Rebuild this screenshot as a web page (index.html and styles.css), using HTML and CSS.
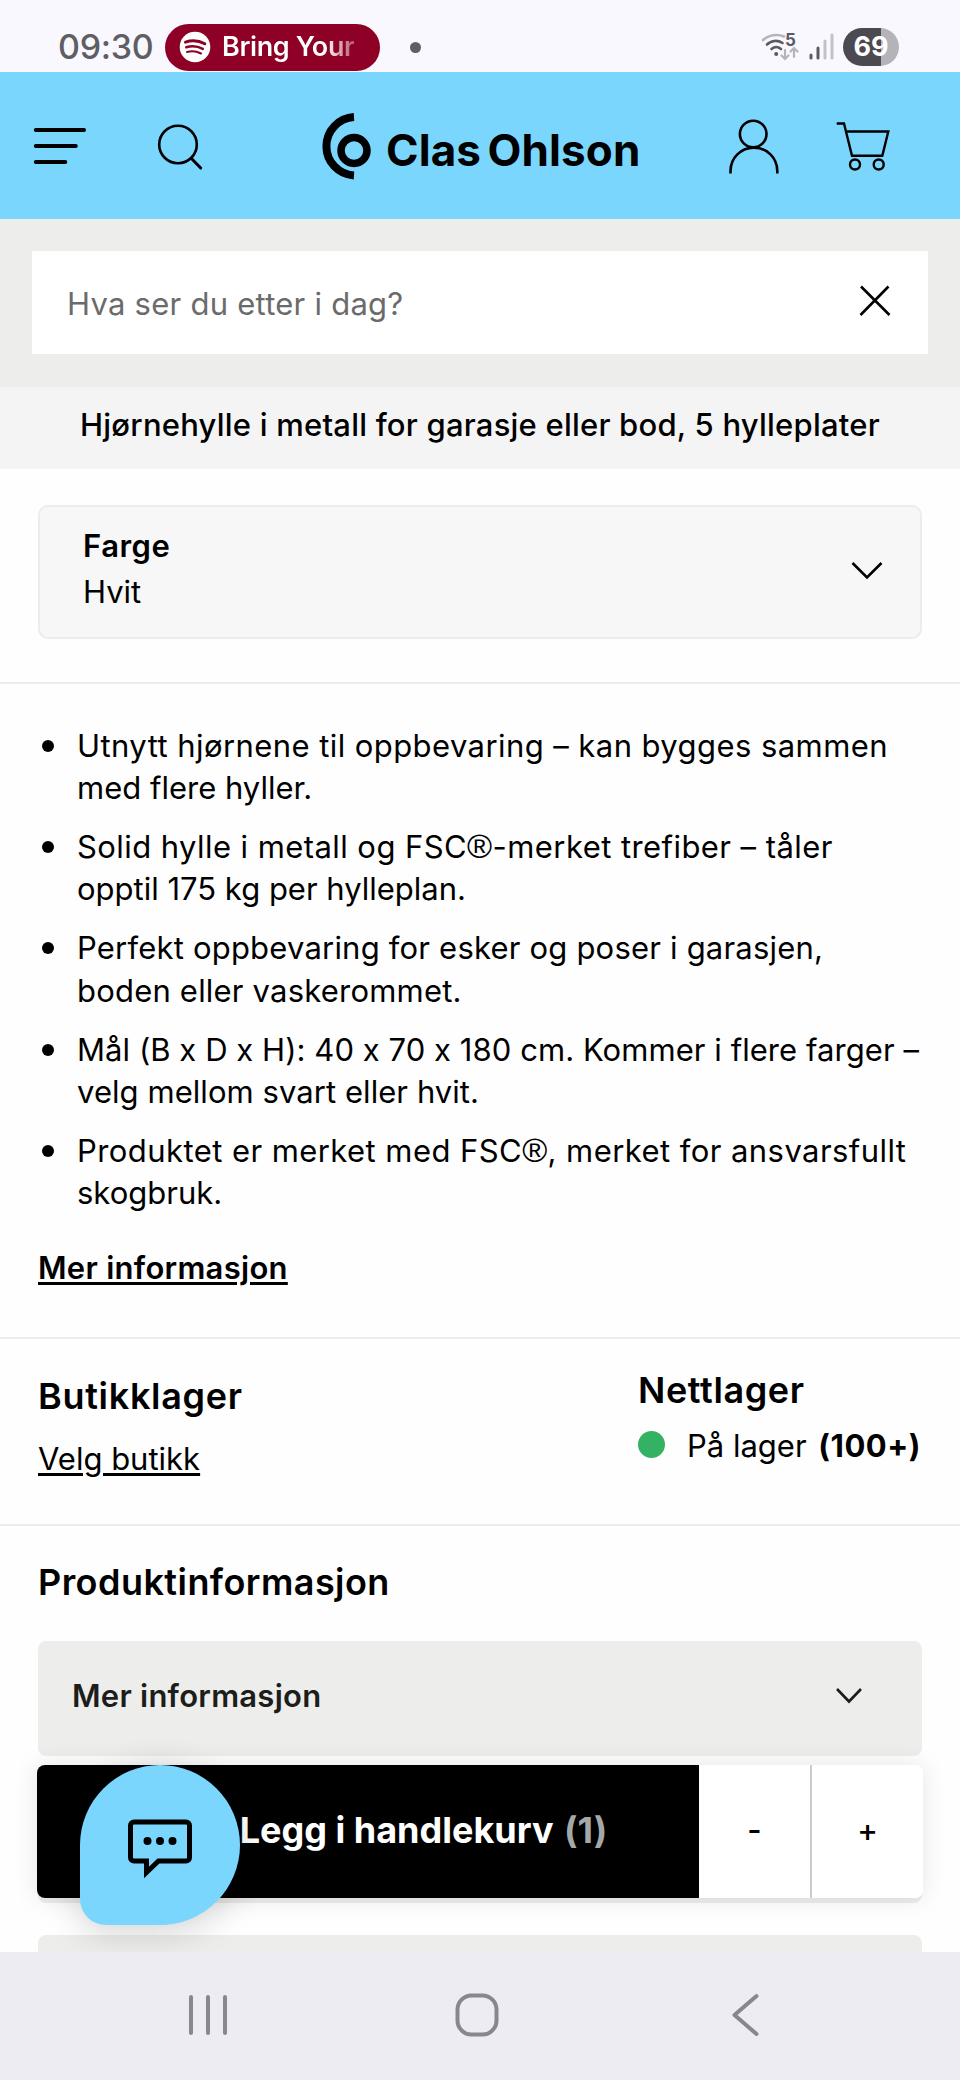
FILE: index.html
```html
<!DOCTYPE html>
<html lang="no">
<head>
    <meta charset="UTF-8">
    <meta name="viewport" content="width=device-width, initial-scale=1.0">
    <title>Clas Ohlson</title>
    <link rel="stylesheet" href="styles.css">
</head>
<body>
    <!-- Phone status bar -->
    <div class="status-bar">
        <span class="clock">09:30</span>
        <div class="music-pill">
            <svg width="32" height="32" viewBox="0 0 32 32" fill="none" stroke="#8e0025" stroke-linecap="round">
                <circle cx="16" cy="16" r="15.3" fill="#fff" stroke="none"/>
                <path d="M6.5 11.2c6-2 13.500-1.500 19.300 1.600" stroke-width="3"/>
                <path d="M7.300 16.300c5.500-1.600 11.500-1 16.500 1.600" stroke-width="2.500"/>
                <path d="M8 21c4.500-1.200 9.500-.8 14 1.500" stroke-width="2"/>
            </svg>
            <span class="song">Bring Your</span>
        </div>
        <span class="dot"></span>
        <div class="status-icons">
            <svg width="38" height="28" viewBox="0 0 38 28" fill="none" stroke-linecap="round">
                <path d="M2 7C8 1.500 17 .8 23 3.500" stroke="#b5b4ba" stroke-width="2.600"/>
                <path d="M6 11.500c4.500-4.500 11-4.500 15.500-1.500M10.500 16c3-2.500 6.500-2.500 9.500 0" stroke="#5b5a60" stroke-width="2.600"/>
                <circle cx="15.200" cy="21" r="2" fill="#5b5a60"/>
                <path d="M24 17v9M20.500 22.500l3.500 3.500 3.500-3.500M33 24v-9M29.500 18.500l3.500-3.500 3.500 3.500" stroke="#b5b4ba" stroke-width="2.200"/>
                <text x="24" y="12.500" class="wifi-num">5</text>
            </svg>
            <svg width="26" height="28" viewBox="0 0 26 28" stroke-width="3" stroke-linecap="round">
                <path d="M3 22v3M10 15v10" stroke="#5b5a60"/>
                <path d="M17 8v17M24 2v23" stroke="#c2c1c8"/>
            </svg>
            <span class="battery">69</span>
        </div>
    </div>

    <header>
        <svg class="menu" width="54" height="40" viewBox="0 0 54 40" stroke="#000" stroke-width="4" stroke-linecap="round">
            <path d="M2.800 4H51M2.800 20h40M2.800 36h29.500"/>
        </svg>
        <svg class="search" width="48" height="48" viewBox="0 0 48 48" fill="none" stroke="#000" stroke-width="2.600" stroke-linecap="round">
            <circle cx="21" cy="21.500" r="18.800"/>
            <path d="M34.500 35.500L43.700 45" stroke-width="3"/>
        </svg>
        <div class="logo">
            <svg width="52" height="68" viewBox="0 0 52 68" fill="none" stroke="#000">
                <path d="M34 5a29.300 29.300 0 0 0 0 58.500" stroke-width="8"/>
                <circle cx="34" cy="38.500" r="13" stroke-width="7.500"/>
            </svg>
            <span class="brand">Clas Ohlson</span>
        </div>
        <svg class="user" width="50" height="56" viewBox="0 0 50 56" fill="none" stroke="#000" stroke-width="2.600">
            <circle cx="24.200" cy="15" r="13.300"/>
            <path d="M1.500 54.500V52a23.400 23.400 0 0 1 46.800 0v2.500"/>
        </svg>
        <svg class="cart" width="56" height="52" viewBox="0 0 56 52" fill="none" stroke="#000" stroke-width="2.400">
            <path d="M.7 3.500H8l8 32.200h30.300l6-24.200H10"/>
            <circle cx="19" cy="44.500" r="5"/>
            <circle cx="42.700" cy="44.500" r="5"/>
        </svg>
    </header>

    <div class="search-bar">
        <div class="search-box">
            <span class="placeholder">Hva ser du etter i dag?</span>
            <svg width="32" height="32" viewBox="0 0 32 32" stroke="#000" stroke-width="2.600">
                <path d="M2 1.500L30.500 30M29.500 1.500L1.500 30"/>
            </svg>
        </div>
    </div>

    <main>
        <h1>Hjørnehylle i metall for garasje eller bod, 5 hylleplater</h1>

        <section class="options">
            <div class="select-box">
                <div>
                    <div class="select-label">Farge</div>
                    <div class="select-value">Hvit</div>
                </div>
                <svg width="32" height="20" viewBox="0 0 32 20" fill="none" stroke="#000" stroke-width="2.600">
                    <path d="M1.500 2L16 16.500 30.500 2"/>
                </svg>
            </div>
        </section>

        <section class="details">
            <ul>
                <li><span class="wider">Utnytt hjørnene til oppbevaring – kan bygges sammen</span><br>med flere hyller.</li>
                <li><span class="wider">Solid hylle i metall og FSC<span class="reg">®</span>-merket trefiber – tåler</span><br>opptil 175 kg per hylleplan.</li>
                <li class="wide">Perfekt oppbevaring for esker og poser i garasjen,<br>boden eller vaskerommet.</li>
                <li class="normal">Mål (B x D x H): 40 x 70 x 180 cm. Kommer i flere farger –<br>velg mellom svart eller hvit.</li>
                <li><span class="wider">Produktet er merket med FSC<span class="reg">®</span>, merket for ansvarsfullt</span><br>skogbruk.</li>
            </ul>
            <a class="more-link" href="#">Mer informasjon</a>
        </section>

        <section class="stock">
            <div class="store">
                <h2 class="h-store">Butikklager</h2>
                <a class="store-link" href="#">Velg butikk</a>
            </div>
            <div class="online">
                <h2 class="h-online">Nettlager</h2>
                <div class="in-stock"><span class="green"></span><span>På lager <b>(100+)</b></span></div>
            </div>
        </section>

        <section class="product-info">
            <h2 class="h-info">Produktinformasjon</h2>
            <div class="panel">
                <span>Mer informasjon</span>
                <svg width="28" height="18" viewBox="0 0 28 18" fill="none" stroke="#1d1d1b" stroke-width="2.600">
                    <path d="M2 2l12 12.500L26 2"/>
                </svg>
            </div>
            <div class="panel"></div>
            <div class="panel"></div>
        </section>

        <!-- Sticky add to cart -->
        <div class="buy-bar">
            <button class="add">Legg i handlekurv <span>(1)</span></button>
            <button class="qty">-</button>
            <button class="qty plus">+</button>
        </div>

        <div class="chat">
            <svg width="64" height="60" viewBox="0 0 64 60" fill="none" stroke="#000" stroke-width="5">
                <path d="M6 3h52a3.500 3.500 0 0 1 3.500 3.500v32a3.500 3.500 0 0 1-3.500 3.500H30.500L18.500 53.500V42H6a3.500 3.500 0 0 1-3.500-3.500v-32A3.500 3.500 0 0 1 6 3z"/>
                <g fill="#000" stroke="none">
                    <circle cx="19.500" cy="22" r="4"/>
                    <circle cx="32" cy="22" r="4"/>
                    <circle cx="44.500" cy="22" r="4"/>
                </g>
            </svg>
        </div>
    </main>

    <!-- Android navigation -->
    <nav>
        <svg width="38" height="42" viewBox="0 0 38 42" stroke="#88878d" stroke-width="4" stroke-linecap="round">
            <path d="M2 3v36M19 3v36M36 3v36"/>
        </svg>
        <svg class="home" width="44" height="44" viewBox="0 0 44 44" fill="none" stroke="#88878d" stroke-width="4">
            <rect x="2.500" y="2.500" width="39" height="39" rx="14"/>
        </svg>
        <svg width="28" height="44" viewBox="0 0 28 44" fill="none" stroke="#88878d" stroke-width="4" stroke-linecap="round" stroke-linejoin="round">
            <path d="M25.500 3l-22 19 22 19"/>
        </svg>
    </nav>
</body>
</html>
```
FILE: styles.css
```css
* {
    box-sizing: border-box;
}
body {
    margin: 0;
    width: 960px;
    height: 2080px;
    display: flex;
    flex-direction: column;
    overflow: hidden;
    background: #fefefe;
    color: #000;
    font-family: Inter, "Liberation Sans", sans-serif;
    font-size: 31px;
    font-feature-settings: "calt" 0;
    line-height: 42px;
    white-space: nowrap;
}
svg {
    display: block;
    flex: none;
    overflow: visible;
}
a {
    color: #000;
    text-decoration-thickness: 2.5px;
    text-underline-offset: 3px;
}
h1, h2 {
    margin: 0;
}
button {
    border: 0;
    padding: 0;
    font: inherit;
    color: inherit;
}

/* status bar */
.status-bar {
    height: 72px;
    padding: 22px 61px 0 58px;
    display: flex;
    align-items: center;
    background: #f9f8fe;
}
.clock {
    width: 107px;
    font-size: 34px;
    font-weight: 500;
    color: #5f5e64;
    letter-spacing: -0.3px;
}
.music-pill {
    width: 215px;
    height: 47px;
    padding-left: 14px;
    display: flex;
    align-items: center;
    gap: 11px;
    border-radius: 24px;
    background: #8e0025;
}
.song {
    font-size: 27px;
    font-weight: 600;
    letter-spacing: -0.4px;
    color: transparent;
    background: linear-gradient(to right, #fff 78%, rgba(255, 255, 255, 0.35));
    -webkit-background-clip: text;
    background-clip: text;
}
.dot {
    width: 11px;
    height: 11px;
    margin-left: 30px;
    border-radius: 50%;
    background: #5f5e64;
}
.status-icons {
    margin-left: auto;
    display: flex;
    align-items: center;
    gap: 9px;
}
.wifi-num {
    font-size: 17px;
    font-weight: 700;
    line-height: 1;
    fill: #5b5a60;
}
.battery {
    width: 56px;
    height: 38px;
    border-radius: 19px;
    background: linear-gradient(to right, #4b4a50 68%, #b4b3ba 68%);
    color: #fff;
    font-size: 27px;
    font-weight: 700;
    line-height: 38px;
    text-align: center;
}

/* header */
header {
    height: 147px;
    padding: 0 68px 0 33px;
    display: flex;
    align-items: center;
    background: #7ad6fd;
}
.menu {
    margin-right: 70px;
}
.search {
    margin: 2px 115px 0 0;
}
.logo {
    width: 409px;
    display: flex;
    align-items: center;
    gap: 14px;
}
.brand {
    padding-top: 8px;
    font-size: 44px;
    font-weight: 700;
    letter-spacing: 0.1px;
    word-spacing: -4px;
}
.user {
    margin-top: 2px;
}
.cart {
    margin-left: auto;
}

/* search */
.search-bar {
    height: 168px;
    padding: 32px;
    background: #edeeeb;
}
.search-box {
    height: 103px;
    padding: 0 37px 0 35px;
    display: flex;
    align-items: center;
    justify-content: space-between;
    background: #fff;
}
.search-box svg {
    margin-bottom: 3px;
}
.placeholder {
    padding-top: 3px;
    color: #6b6b6b;
    letter-spacing: 0.25px;
}

/* content */
main {
    position: relative;
    flex: 1;
    min-height: 0;
    overflow: hidden;
}
h1 {
    height: 82px;
    padding: 17px 80px 0;
    background: #f4f4f4;
    font-size: 31px;
    font-weight: 500;
    letter-spacing: 0.22px;
}
section {
    padding: 0 38px;
    border-bottom: 2px solid #ececec;
}
.options {
    height: 215px;
    padding-top: 36px;
}
.select-box {
    height: 134px;
    padding: 18px 37px 0 43px;
    display: flex;
    justify-content: space-between;
    border: 2px solid #ececec;
    border-radius: 10px;
    background: #f7f7f7;
}
.select-box svg {
    margin-top: 36px;
}
.select-label {
    margin-bottom: 4px;
    font-weight: 600;
    letter-spacing: 0.5px;
}
.details {
    height: 655px;
    padding-top: 41px;
}
.details ul {
    margin: 0 0 33px;
    padding-left: 39px;
    line-height: 42.2px;
    list-style: none;
}
.details li {
    position: relative;
    margin-bottom: 16.8px;
}
.details li:last-child {
    margin-bottom: 0;
}
.details li::before {
    content: "";
    position: absolute;
    left: -35px;
    top: 15px;
    width: 12px;
    height: 12px;
    border-radius: 50%;
    background: #000;
}
.normal {
    letter-spacing: 0.06px;
}
.wide {
    letter-spacing: 0.2px;
}
.wider {
    letter-spacing: 0.43px;
}
.reg {
    font-family: "Liberation Sans", sans-serif;
    font-size: 34px;
    line-height: 1;
}
.more-link {
    font-weight: 600;
    letter-spacing: 0.28px;
}
h2 {
    font-size: 36px;
    font-weight: 600;
    line-height: 44px;
}
.stock {
    height: 187px;
    padding-top: 29px;
    display: flex;
    justify-content: space-between;
}
.store {
    padding-top: 6px;
}
.h-store {
    margin-bottom: 20px;
    letter-spacing: 0.7px;
}
.h-online {
    margin-bottom: 13px;
    letter-spacing: 0.6px;
}
.online {
    width: 284px;
}
.in-stock {
    display: flex;
    align-items: center;
}
.green {
    width: 27px;
    height: 27px;
    margin: -4px 22px 0 0;
    border-radius: 50%;
    background: #34b264;
}
.in-stock b {
    margin-left: 3px;
    font-weight: 700;
    letter-spacing: 0.5px;
}
.product-info {
    padding-top: 34px;
    border: 0;
}
.h-info {
    margin-bottom: 37px;
    letter-spacing: 0.45px;
}
.panel {
    height: 115px;
    margin-bottom: 32px;
    padding: 0 59px 5px 34px;
    display: flex;
    align-items: center;
    justify-content: space-between;
    border-radius: 8px;
    background: #edeeeb;
    color: #1d1d1b;
    font-weight: 600;
    letter-spacing: 0.25px;
}

/* sticky buy bar */
.buy-bar {
    position: absolute;
    left: 37px;
    right: 37px;
    top: 1378px;
    height: 133px;
    display: flex;
    border-radius: 8px;
    overflow: hidden;
    background: #fff;
    box-shadow: 0 0 24px rgba(0, 0, 0, 0.1);
}
.add {
    width: 662px;
    padding: 0 0 4px 111px;
    background: #000;
    color: #fff;
    font-size: 36px;
    font-weight: 700;
}
.add span {
    margin-left: 2px;
    color: #a5a8a9;
}
.qty {
    flex: 1;
    padding-bottom: 4px;
    background: #fff;
    font-weight: 500;
}
.plus {
    border-left: 2px solid #ccc;
}

.chat {
    position: absolute;
    left: 80px;
    top: 1378px;
    width: 160px;
    height: 160px;
    padding: 54px 0 0 48px;
    border-radius: 80px 80px 80px 26px;
    background: #7ad6fd;
    box-shadow: 0 6px 36px rgba(0, 0, 0, 0.18);
}

/* bottom navigation */
nav {
    height: 128px;
    padding: 0 201px 3px 189px;
    display: flex;
    align-items: center;
    justify-content: space-between;
    background: #edecf2;
}
.home {
    margin-right: 5px;
}
```
